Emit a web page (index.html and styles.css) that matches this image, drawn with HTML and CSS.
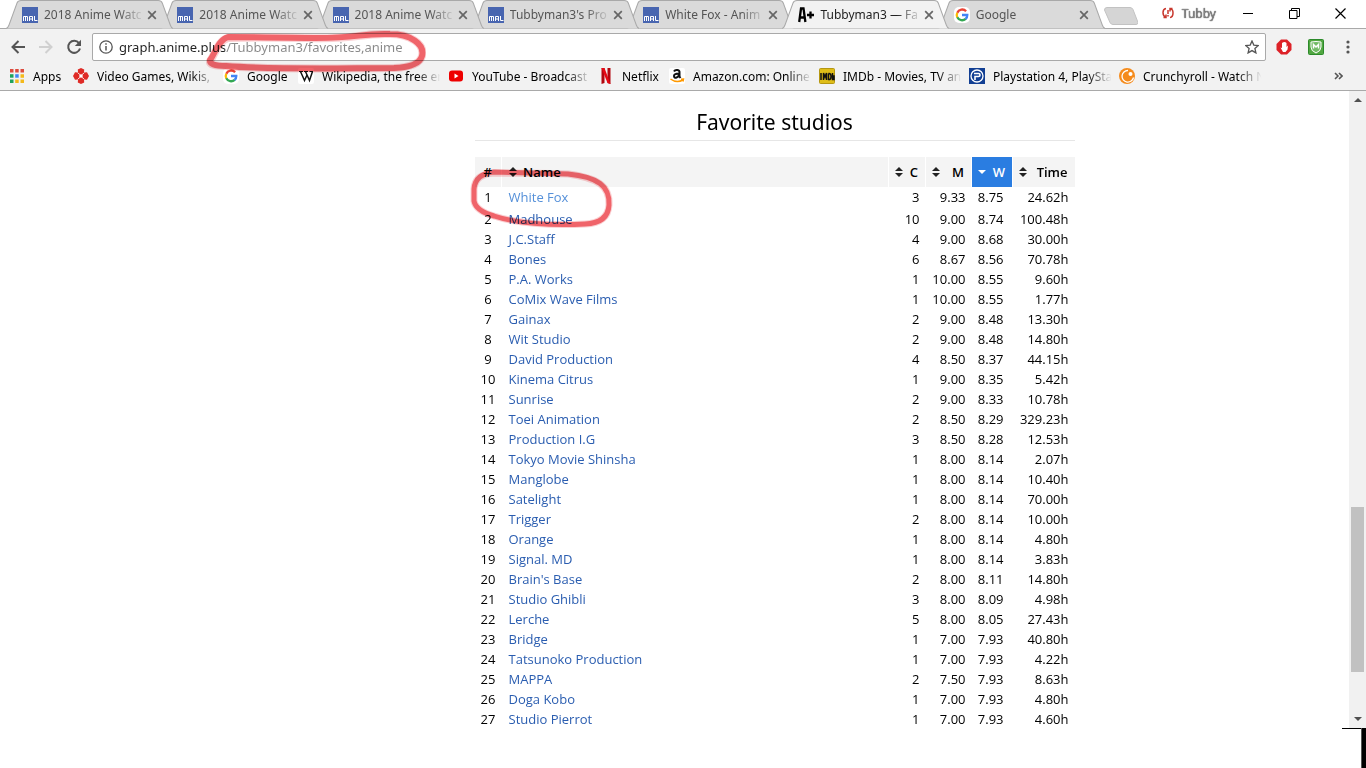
FILE: index.html
```html
<!DOCTYPE html>
<html lang="en">
<head>
<meta charset="utf-8">
<title>Tubbyman3 — Favorites</title>
<link rel="stylesheet" href="styles.css">
</head>
<body>
<svg class="defs" aria-hidden="true">
  <symbol id="tab-shape" viewBox="0 0 167 29" preserveAspectRatio="none"><path d="M0 28.5 Q2 28 3 25 L11 3 Q12 .5 15 .5 H152 Q155 .5 156 3 L164 25 Q165 28 167 28.5" stroke="#a9a9a9"/></symbol>
  <symbol id="mal" viewBox="0 0 16 16"><path fill="#4865b0" d="M0 0h16v16H0z"/><path fill="none" stroke="#fff" d="M1.500 14v-4.500h4v4.500M3.500 9.500v4.500M7.500 14v-4.500h3v4.500M7.500 12h3M12.500 9v4.500h3"/></symbol>
  <symbol id="x" viewBox="0 0 10 10"><path d="M1.200 1.200l7.600 7.600M8.800 1.200l-7.600 7.600" stroke="#666" stroke-width="1.700"/></symbol>
  <symbol id="google" viewBox="0 0 16 16"><rect width="16" height="16" rx="5" fill="#fff"/><g fill="none" stroke-width="2.300"><path d="M12.100 4.200A5.300 5.300 0 0 0 3.300 5.800" stroke="#ea4335"/><path d="M3.300 5.700a5.300 5.300 0 0 0 0 4.800" stroke="#fbbc05"/><path d="M3.300 10.300a5.300 5.300 0 0 0 8.400 1.500" stroke="#34a853"/><path d="M11.500 12a5 5 0 0 0 1.800-4H8" stroke="#4285f4"/></g></symbol>
  <symbol id="sort" viewBox="0 0 8 10"><path fill="#222" d="M0 4l4-4 4 4zM0 6h8l-4 4z"/></symbol>
</svg>

<header class="browser">
  <div class="strip">
    <div class="tabs">
      <div class="tab"><svg class="shape"><use href="#tab-shape"/></svg><svg class="icon"><use href="#mal"/></svg><a href="#" class="label">2018 Anime Watc</a><button class="close" aria-label="Close"><svg><use href="#x"/></svg></button></div>
      <div class="tab"><svg class="shape"><use href="#tab-shape"/></svg><svg class="icon"><use href="#mal"/></svg><a href="#" class="label">2018 Anime Watc</a><button class="close" aria-label="Close"><svg><use href="#x"/></svg></button></div>
      <div class="tab"><svg class="shape"><use href="#tab-shape"/></svg><svg class="icon"><use href="#mal"/></svg><a href="#" class="label">2018 Anime Watc</a><button class="close" aria-label="Close"><svg><use href="#x"/></svg></button></div>
      <div class="tab"><svg class="shape"><use href="#tab-shape"/></svg><svg class="icon"><use href="#mal"/></svg><a href="#" class="label">Tubbyman3's Pro</a><button class="close" aria-label="Close"><svg><use href="#x"/></svg></button></div>
      <div class="tab"><svg class="shape"><use href="#tab-shape"/></svg><svg class="icon"><use href="#mal"/></svg><a href="#" class="label">White Fox - Anim</a><button class="close" aria-label="Close"><svg><use href="#x"/></svg></button></div>
      <div class="tab active"><svg class="shape"><use href="#tab-shape"/></svg><svg class="icon" viewBox="0 0 16 16"><path d="M1.200 15L3 1.500h2.500L7.400 15M2 10.500h4.500M9 8h7M12.500 4.500v7" fill="none" stroke="#000" stroke-width="2.300"/></svg><a href="#" class="label">Tubbyman3 — Fa</a><button class="close" aria-label="Close"><svg><use href="#x"/></svg></button></div>
      <div class="tab"><svg class="shape"><use href="#tab-shape"/></svg><svg class="icon"><use href="#google"/></svg><a href="#" class="label">Google</a><button class="close" aria-label="Close"><svg><use href="#x"/></svg></button></div>
    </div>
    <button class="newtab" aria-label="New tab"><svg viewBox="0 0 34 18"><path d="M3 .5h23q2 0 3 2l5 13q0 2-2 2H9q-2 0-3-2L.500 3q0-2.500 2.500-2.500z" fill="#d5d5d5" stroke="#c2c2c2"/></svg></button>
    <div class="window">
      <button class="profile"><svg viewBox="0 0 12 12" fill="none" stroke="#c8372d" stroke-width="1.500"><path d="M4 1.500Q1 2 1 5.500T3.500 10M1.500 10.500H4V7.500M8 10.500q3-.500 3-4.500T8.500 2M10.500 1.500H8V4.500M6 3v4M6 8v1.500"/></svg><span>Tubby</span></button>
      <button aria-label="Minimize"><svg viewBox="0 0 11 11"><path d="M0 5.500h10" stroke="#000"/></svg></button>
      <button aria-label="Restore"><svg viewBox="0 0 11 11"><path d="M.500 2.500h7.500v8H.500zM2.500 2.500v-2h8v8H8" fill="none" stroke="#000"/></svg></button>
      <button aria-label="Close window"><svg viewBox="0 0 11 11"><path d="M.500.500l10 10M10.500.500l-10 10" stroke="#000" stroke-width="1.200"/></svg></button>
    </div>
  </div>

  <div class="toolbar">
    <button class="nav" aria-label="Back"><svg viewBox="0 0 16 16" fill="none" stroke="#555" stroke-width="2"><path d="M15 8H2.500M8.500 2l-6 6 6 6"/></svg></button>
    <button class="nav" aria-label="Forward"><svg viewBox="0 0 16 16" fill="none" stroke="#d0d0d0" stroke-width="2"><path d="M1 8h12.500M7.500 2l6 6-6 6"/></svg></button>
    <button class="nav" aria-label="Reload"><svg viewBox="0 0 16 16"><path d="M13 4.200A6 6 0 1 0 14 9.500" fill="none" stroke="#555" stroke-width="2"/><path d="M15 .800v6.200H8.800z" fill="#555"/></svg></button>
    <div class="address">
      <svg class="info" viewBox="0 0 14 14"><circle cx="7" cy="7" r="6.200" fill="none" stroke="#555" stroke-width="1.300"/><path d="M7 6v4.500M7 3.300v1.500" stroke="#555" stroke-width="1.500"/></svg>
      <input type="text" aria-label="Address" value="graph.anime.plus/Tubbyman3/favorites,anime">
      <button class="star" aria-label="Bookmark"><svg viewBox="0 0 14 14"><path d="M7 1l1.800 4.100 4.500.4-3.400 3 1 4.400L7 10.600l-3.900 2.300 1-4.400-3.400-3 4.500-.4z" fill="none" stroke="#555" stroke-width="1.300"/></svg></button>
      <svg class="mark mark-url" viewBox="0 0 220 44" fill="none" stroke="#f0646a" stroke-linejoin="round" stroke-linecap="round"><path stroke-width="8" opacity=".3" d="M22 8C12 10 9 25 4 31Q3 36 20 36C70 40 140 38 188 38Q213 37 216 26C219 14 204 4 184 4C150 3 155 10 100 8Q50 7 22 8Z"/><path stroke-width="6" d="M22 7C12 10 9 24 4 30Q3 36 20 36C70 40 140 38 188 38Q213 37 216 26C219 14 204 4 184 4C150 3 155 9 100 8Q50 7 22 7Z"/></svg>
    </div>
    <button class="ext" aria-label="Ad blocker"><svg viewBox="0 0 16 16"><path d="M5 .500h6L15.500 5v6L11 15.500H5L.500 11V5z" fill="#dd2228"/><path d="M4.500 8.500L6 9V4l1.300-.8L9 3l1.500 1v4l1.500-1.500-.5 4L9.500 13H7z" fill="#fff"/></svg></button>
    <button class="ext" aria-label="WebAdvisor"><svg viewBox="0 0 16 16"><rect x=".500" y=".500" width="15" height="15" rx="1" fill="#51a741" stroke="#2c8a2b"/><path d="M3 3q5-1 10 0v5q0 4-5 6-5-2-5-6z" fill="#72bb66" stroke="#fff"/><path d="M5.500 9.500V5.500L8 8l2.500-2.500v4" fill="none" stroke="#fff" stroke-width="1.500"/></svg></button>
    <button class="ext menu" aria-label="Menu"><svg viewBox="0 0 16 16" fill="#555"><circle cx="8" cy="3" r="1.600"/><circle cx="8" cy="8" r="1.600"/><circle cx="8" cy="13" r="1.600"/></svg></button>
  </div>

  <nav class="bookmarks" aria-label="Bookmarks">
    <a href="#" class="apps"><svg class="icon" viewBox="0 0 16 16"><path fill="#dd4b3e" d="M1 1h3.500v3.500H1zM6.200 1h3.500v3.500H6.200zM11.500 1H15v3.500h-3.500z"/><path fill="#1fa35c" d="M1 6.200h3.500v3.500H1z"/><path fill="#4286f4" d="M6.200 6.200h3.500v3.500H6.200z"/><path fill="#f4b91b" d="M11.500 6.200H15v3.500h-3.500zM6.200 11.500h3.500V15H6.200zM11.500 11.500H15V15h-3.500z"/><path fill="#1fa35c" d="M1 11.500h3.500V15H1z"/></svg><span>Apps</span></a>
    <a href="#" class="wide"><svg class="icon" viewBox="0 0 16 16" fill="#df2b26"><path d="M5 4.500L4.800 1.500 8 0l3.200 1.500L11 4.500l3-.2L16 8l-2 3.700-3-.2.200 3L8 16l-3.200-1.500.2-3-3 .2L0 8l2-3.700z"/><path d="M7 6.800l-2-2M9 6.800l2-2M7 9.200l-2 2M9 9.200l2 2" stroke="#fff"/><circle cx="8" cy="8" r="1.800" fill="#fff"/></svg><span>Video Games, Wikis,</span></a>
    <a href="#" class="g"><svg class="icon"><use href="#google"/></svg><span>Google</span></a>
    <a href="#" class="wide"><svg class="icon" viewBox="0 0 16 16"><rect width="16" height="16" rx="2" fill="#fff"/><path d="M1 3.500h4M6 3.500h4M11.500 3.500H15" stroke="#111"/><path d="M2.500 3.500l4 9L9 7M7.500 3.500l4 9 3-9" fill="none" stroke="#111" stroke-width="1.500"/></svg><span>Wikipedia, the free er</span></a>
    <a href="#" class="wide"><svg class="icon" viewBox="0 0 16 16"><rect x="1" y="2.500" width="14" height="11" rx="3" fill="#e00"/><path d="M6.500 5.500v5l4-2.500z" fill="#fff"/></svg><span>YouTube - Broadcast</span></a>
    <a href="#" class="n"><svg class="icon" viewBox="0 0 16 16"><path d="M3.500 0h3v15l-3 1zM9.500 0h3v16l-3-1z" fill="#b1060f"/><path d="M3.500 0h3l6 16-3-1z" fill="#e50914"/></svg><span>Netflix</span></a>
    <a href="#" class="wide"><svg class="icon" viewBox="0 0 16 16"><rect width="16" height="16" rx="2" fill="#fff"/><path d="M5 3.500q1-2 3.500-1.500t2 3v3.500L11.500 10M10 5.500q-5 0-5 2.500c0 3 5 2 5-2.500" fill="none" stroke="#111" stroke-width="2"/><path d="M1.500 11q6 4.500 12.500 1M12 11.200l2.500-.2-.500 2.500" fill="none" stroke="#f90" stroke-width="1.500"/></svg><span>Amazon.com: Online</span></a>
    <a href="#" class="wide"><svg class="icon" viewBox="0 0 16 16"><rect x=".500" y=".500" width="15" height="15" rx="1" fill="#dfbd18" stroke="#b59712"/><path d="M2 5v7M4.500 12V5l1.500 4 1.500-4v7M9.500 5.500v6Q12 12 12 8.500t-2.500-3M13.500 5v6.500H15V8h-1.500" fill="none" stroke="#111" stroke-width="1.500"/></svg><span>IMDb - Movies, TV an</span></a>
    <a href="#" class="wide"><svg class="icon" viewBox="0 0 16 16"><path fill="#123f93" d="M0 0h16v16H0z"/><circle cx="8" cy="8" r="6" fill="none" stroke="#fff" stroke-width="1.300"/><path d="M6 12V8.500h3.500q1.500 0 1.500-1.500T9.500 5.500H5" fill="none" stroke="#fff" stroke-width="1.600"/></svg><span>Playstation 4, PlaySta</span></a>
    <a href="#" class="wide"><svg class="icon" viewBox="0 0 16 16"><circle cx="8" cy="8" r="8" fill="#f58b1c"/><path d="M14.500 9.500A5.800 5.800 0 1 1 9 2.500" fill="none" stroke="#fff" stroke-width="1.300"/><circle cx="9.500" cy="8" r="4.200" fill="#f58b1c"/><circle cx="11.500" cy="6" r="2" fill="#fff"/></svg><span>Crunchyroll - Watch N</span></a>
    <button class="more" aria-label="More bookmarks"><svg viewBox="0 0 9 8"><path d="M1 1l3 3-3 3M5 1l3 3-3 3" fill="none" stroke="#555" stroke-width="1.600"/></svg></button>
  </nav>
</header>

<div class="viewport">
  <main>
    <section class="studios">
      <h2>Favorite studios</h2>
      <div class="tablewrap">
      <table>
        <colgroup><col class="c-rank"><col><col class="c-count"><col class="c-mean"><col class="c-weight"><col class="c-time"></colgroup>
        <thead><tr>
          <th class="rank">#</th>
          <th class="name"><button><svg><use href="#sort"/></svg>Name</button></th>
          <th><button><svg><use href="#sort"/></svg>C</button></th>
          <th><button><svg><use href="#sort"/></svg>M</button></th>
          <th class="sorted"><button><svg viewBox="0 0 8 10"><path d="M0 3h8L4 7z" fill="#fff"/></svg>W</button></th>
          <th><button><svg><use href="#sort"/></svg>Time</button></th>
        </tr></thead>
        <tbody>
          <tr class="first"><td>1</td><td><a href="#">White Fox</a></td><td>3</td><td>9.33</td><td>8.75</td><td>24.62h</td></tr>
          <tr><td>2</td><td><a href="#">Madhouse</a></td><td>10</td><td>9.00</td><td>8.74</td><td>100.48h</td></tr>
          <tr><td>3</td><td><a href="#">J.C.Staff</a></td><td>4</td><td>9.00</td><td>8.68</td><td>30.00h</td></tr>
          <tr><td>4</td><td><a href="#">Bones</a></td><td>6</td><td>8.67</td><td>8.56</td><td>70.78h</td></tr>
          <tr><td>5</td><td><a href="#">P.A. Works</a></td><td>1</td><td>10.00</td><td>8.55</td><td>9.60h</td></tr>
          <tr><td>6</td><td><a href="#">CoMix Wave Films</a></td><td>1</td><td>10.00</td><td>8.55</td><td>1.77h</td></tr>
          <tr><td>7</td><td><a href="#">Gainax</a></td><td>2</td><td>9.00</td><td>8.48</td><td>13.30h</td></tr>
          <tr><td>8</td><td><a href="#">Wit Studio</a></td><td>2</td><td>9.00</td><td>8.48</td><td>14.80h</td></tr>
          <tr><td>9</td><td><a href="#">David Production</a></td><td>4</td><td>8.50</td><td>8.37</td><td>44.15h</td></tr>
          <tr><td>10</td><td><a href="#">Kinema Citrus</a></td><td>1</td><td>9.00</td><td>8.35</td><td>5.42h</td></tr>
          <tr><td>11</td><td><a href="#">Sunrise</a></td><td>2</td><td>9.00</td><td>8.33</td><td>10.78h</td></tr>
          <tr><td>12</td><td><a href="#">Toei Animation</a></td><td>2</td><td>8.50</td><td>8.29</td><td>329.23h</td></tr>
          <tr><td>13</td><td><a href="#">Production I.G</a></td><td>3</td><td>8.50</td><td>8.28</td><td>12.53h</td></tr>
          <tr><td>14</td><td><a href="#">Tokyo Movie Shinsha</a></td><td>1</td><td>8.00</td><td>8.14</td><td>2.07h</td></tr>
          <tr><td>15</td><td><a href="#">Manglobe</a></td><td>1</td><td>8.00</td><td>8.14</td><td>10.40h</td></tr>
          <tr><td>16</td><td><a href="#">Satelight</a></td><td>1</td><td>8.00</td><td>8.14</td><td>70.00h</td></tr>
          <tr><td>17</td><td><a href="#">Trigger</a></td><td>2</td><td>8.00</td><td>8.14</td><td>10.00h</td></tr>
          <tr><td>18</td><td><a href="#">Orange</a></td><td>1</td><td>8.00</td><td>8.14</td><td>4.80h</td></tr>
          <tr><td>19</td><td><a href="#">Signal. MD</a></td><td>1</td><td>8.00</td><td>8.14</td><td>3.83h</td></tr>
          <tr><td>20</td><td><a href="#">Brain's Base</a></td><td>2</td><td>8.00</td><td>8.11</td><td>14.80h</td></tr>
          <tr><td>21</td><td><a href="#">Studio Ghibli</a></td><td>3</td><td>8.00</td><td>8.09</td><td>4.98h</td></tr>
          <tr><td>22</td><td><a href="#">Lerche</a></td><td>5</td><td>8.00</td><td>8.05</td><td>27.43h</td></tr>
          <tr><td>23</td><td><a href="#">Bridge</a></td><td>1</td><td>7.00</td><td>7.93</td><td>40.80h</td></tr>
          <tr><td>24</td><td><a href="#">Tatsunoko Production</a></td><td>1</td><td>7.00</td><td>7.93</td><td>4.22h</td></tr>
          <tr><td>25</td><td><a href="#">MAPPA</a></td><td>2</td><td>7.50</td><td>7.93</td><td>8.63h</td></tr>
          <tr><td>26</td><td><a href="#">Doga Kobo</a></td><td>1</td><td>7.00</td><td>7.93</td><td>4.80h</td></tr>
          <tr><td>27</td><td><a href="#">Studio Pierrot</a></td><td>1</td><td>7.00</td><td>7.93</td><td>4.60h</td></tr>
        </tbody>
      </table>
      <svg class="mark mark-row" viewBox="0 0 144 64" fill="none" stroke="#f0646a" stroke-linejoin="round"><path stroke-width="7" opacity=".3" d="M24 7Q5 8 4 23V35Q6 45 24 50C45 57 80 60 115 58Q138 57 139 39C140 20 128 12 98 8Q65 7 24 7Z"/><path stroke-width="5" d="M24 6Q5 8 4 23V35Q6 45 24 50C45 57 80 60 115 58Q138 57 139 39C140 20 128 11 98 8Q65 7 24 6Z"/></svg>
      </div>
    </section>
  </main>
  <div class="scrollbar" aria-hidden="true">
    <svg viewBox="0 0 8 4"><path d="M0 4l4-4 4 4z" fill="#505050"/></svg>
    <div class="track"><div class="thumb"></div></div>
    <svg viewBox="0 0 8 4"><path d="M0 0h8L4 4z" fill="#505050"/></svg>
  </div>
</div>
<div class="edge"><div class="line"></div><div class="block"></div></div>
</body>
</html>
```
FILE: styles.css
```css
* { box-sizing: border-box; }

body {
  margin: 0;
  height: 100vh;
  display: flex;
  flex-direction: column;
  overflow: hidden;
  background: #fff;
  color: #000;
  font-family: "Open Sans", "Noto Sans", sans-serif;
  font-size: 13px;
}

button {
  margin: 0;
  padding: 0;
  border: 0;
  background: none;
  font: inherit;
  color: inherit;
}

a { text-decoration: none; color: inherit; }
svg { display: block; flex: none; }
.defs { position: absolute; width: 0; height: 0; }
.icon { width: 16px; height: 16px; }

/* Browser frame */
.browser {
  flex: none;
  background: #f2f2f2;
  border-bottom: 1px solid #a9a9a9;
  font-family: "Noto Sans", "Open Sans", sans-serif;
  font-size: 12px;
}

.strip {
  display: flex;
  height: 29px;
  padding-left: 6px;
  background: #fff;
  border-bottom: 1px solid #a9a9a9;
}

.tabs {
  flex: 0 1 1087px;
  display: grid;
  grid-template-columns: repeat(7, 1fr);
}

.tab {
  position: relative;
  display: flex;
  align-items: center;
  min-width: 0;
  height: 29px;
  padding: 0 4px 0 16px;
  color: #555;
  isolation: isolate;
}

.tab:nth-child(1) { z-index: 5; }
.tab:nth-child(2) { z-index: 4; }
.tab:nth-child(3) { z-index: 3; }
.tab:nth-child(4) { z-index: 2; }
.tab:nth-child(5) { z-index: 1; }
.tab.active { z-index: 6; color: #222; }

.shape {
  position: absolute;
  z-index: -1;
  inset: 0 -12px 0 0;
  width: calc(100% + 12px);
  height: 29px;
  fill: #dadada;
}

.active .shape { fill: #f2f2f2; }

.label {
  flex: 1;
  min-width: 0;
  margin: 0 2px 0 6px;
  overflow: hidden;
  white-space: nowrap;
  mask-image: linear-gradient(to right, #000 75%, transparent);
}

.close svg { width: 10px; height: 10px; }

.newtab { margin: 7px 0 0 11px; align-self: flex-start; }
.newtab svg { width: 34px; height: 18px; }

.window {
  margin-left: auto;
  display: flex;
  align-items: center;
  gap: 35px;
  padding: 0 20px 2px 0;
}

.window svg { width: 11px; height: 11px; }
.profile { display: flex; align-items: center; gap: 8px; margin-right: -8px; color: #888; text-shadow: 0 0 1px #000; }
.profile svg { width: 12px; height: 12px; }

.toolbar {
  display: flex;
  align-items: center;
  height: 34px;
  padding: 2px 10px 0 10px;
}

.nav { margin-right: 12px; }
.nav:nth-child(3) { margin-right: 10px; }
.nav svg, .ext svg { width: 16px; height: 16px; }
.ext { margin-left: 16px; }
.ext:nth-of-type(4) { margin-left: 10px; }

.address {
  position: relative;
  flex: 1;
  display: flex;
  align-items: center;
  height: 28px;
  padding: 0 6px;
  border: 1px solid #a9a9a9;
  border-radius: 2px;
  background: #fff;
}

.info { width: 14px; height: 14px; }
.star svg { width: 14px; height: 14px; }

.address input {
  flex: 1;
  min-width: 0;
  margin-left: 6px;
  padding: 0;
  border: 0;
  outline: 0;
  font-family: "Noto Sans", "Open Sans", sans-serif;
  font-size: 13px;
  background: linear-gradient(to right, #222 106px, #888 106px);
  background-clip: text;
  -webkit-text-fill-color: transparent;
}

.bookmarks {
  display: flex;
  align-items: center;
  gap: 5px;
  height: 27px;
  padding: 0 23px 1px 9px;
}

.bookmarks a { display: flex; align-items: center; gap: 8px; min-width: 0; }
.bookmarks a span { overflow: hidden; white-space: nowrap; }
.bookmarks .apps { flex: 0 0 59px; }
.bookmarks .g { flex: 0 0 70px; }
.bookmarks .n { flex: 0 0 66px; }
.bookmarks .wide { flex: 0 1 145px; }
.bookmarks .wide span { flex: 1; mask-image: linear-gradient(to right, #000 78%, transparent 98%); }
.more { margin-left: auto; }
.more svg { width: 9px; height: 8px; }

/* Page */
.viewport { flex: 1; min-height: 0; display: flex; }
main { flex: 1; padding-left: 200px; overflow: hidden; }
.studios { width: 600px; max-width: 100%; margin: 15px auto 0; }

h2 {
  margin: 0 0 16px;
  padding-bottom: 2px;
  border-bottom: 1px solid #e6e6e6;
  font-family: "Noto Sans", "Open Sans", sans-serif;
  font-size: 21px;
  font-weight: 400;
  line-height: 32px;
  text-align: center;
}

.tablewrap { position: relative; }
table { width: 100%; table-layout: fixed; border-collapse: collapse; }
.c-rank { width: 27px; }
.c-count { width: 37px; }
.c-mean { width: 46px; }
.c-weight { width: 41px; }
.c-time { width: 62px; }

th {
  height: 30px;
  padding: 0 7px 0 6px;
  background: #f4f4f4;
  font-weight: 600;
}

th + th { border-left: 1px solid #fff; }
th.rank { padding: 0; }
th button { display: flex; align-items: center; justify-content: space-between; width: 100%; }
th.name { padding-left: 7px; }
th.name button { justify-content: flex-start; gap: 6px; }
th svg { width: 8px; height: 10px; }
th.sorted { background: #2a7de1; color: #fff; }

td { height: 20px; padding: 0 6px; line-height: 20px; text-align: right; vertical-align: top; }
td:first-child { padding: 0; text-align: center; }
td:nth-child(2) { padding-left: 7px; text-align: left; }
td:nth-child(5) { padding-right: 9px; }
td a { color: #2a5db0; }
.first td { height: 22px; }
.first a { color: #5590d9; }

/* Hand-drawn rings */
.mark { position: absolute; pointer-events: none; mix-blend-mode: multiply; }
.mark-url { left: 113px; top: -4px; width: 220px; height: 44px; }
.mark-row { left: -5px; top: 9px; width: 144px; height: 64px; }

.scrollbar {
  flex: 0 0 17px;
  display: flex;
  flex-direction: column;
  align-items: center;
  padding: 7px 0;
  background: #f1f1f1;
}

.scrollbar svg { width: 8px; height: 4px; }
.track { flex: 1; width: 13px; display: flex; flex-direction: column; justify-content: flex-end; padding-bottom: 45px; }
.thumb { height: 29%; background: #c1c1c1; }

.edge { flex: 0 0 40px; display: flex; justify-content: flex-end; }
.line { width: 19px; border-top: 1px solid #000; }
.block { width: 5px; background: #000; border-left: 1px solid #555; }
```
